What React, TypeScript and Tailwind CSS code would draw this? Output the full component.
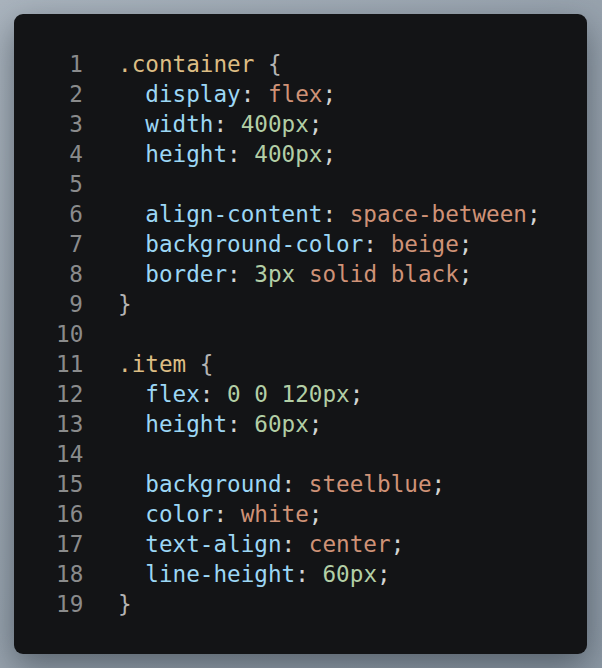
import React from 'react';

type Tok = { t: string; c?: string };

const SEL = 'text-[#dcbd84]';
const PROP = 'text-[#9cd7f5]';
const STR = 'text-[#cf9277]';
const NUM = 'text-[#b3cfa6]';
const PUN = 'text-[#d4d4d4]';
const BRACE = 'text-[#b4b4b4]';

const lines: Tok[][] = [
  [{ t: '.container', c: SEL }, { t: ' ' }, { t: '{', c: BRACE }],
  [{ t: '  ' }, { t: 'display', c: PROP }, { t: ': ', c: PUN }, { t: 'flex', c: STR }, { t: ';', c: PUN }],
  [{ t: '  ' }, { t: 'width', c: PROP }, { t: ': ', c: PUN }, { t: '400px', c: NUM }, { t: ';', c: PUN }],
  [{ t: '  ' }, { t: 'height', c: PROP }, { t: ': ', c: PUN }, { t: '400px', c: NUM }, { t: ';', c: PUN }],
  [],
  [{ t: '  ' }, { t: 'align-content', c: PROP }, { t: ': ', c: PUN }, { t: 'space-between', c: STR }, { t: ';', c: PUN }],
  [{ t: '  ' }, { t: 'background-color', c: PROP }, { t: ': ', c: PUN }, { t: 'beige', c: STR }, { t: ';', c: PUN }],
  [
    { t: '  ' },
    { t: 'border', c: PROP },
    { t: ': ', c: PUN },
    { t: '3px', c: NUM },
    { t: ' ' },
    { t: 'solid black', c: STR },
    { t: ';', c: PUN },
  ],
  [{ t: '}', c: BRACE }],
  [],
  [{ t: '.item', c: SEL }, { t: ' ' }, { t: '{', c: BRACE }],
  [{ t: '  ' }, { t: 'flex', c: PROP }, { t: ': ', c: PUN }, { t: '0 0 120px', c: NUM }, { t: ';', c: PUN }],
  [{ t: '  ' }, { t: 'height', c: PROP }, { t: ': ', c: PUN }, { t: '60px', c: NUM }, { t: ';', c: PUN }],
  [],
  [{ t: '  ' }, { t: 'background', c: PROP }, { t: ': ', c: PUN }, { t: 'steelblue', c: STR }, { t: ';', c: PUN }],
  [{ t: '  ' }, { t: 'color', c: PROP }, { t: ': ', c: PUN }, { t: 'white', c: STR }, { t: ';', c: PUN }],
  [{ t: '  ' }, { t: 'text-align', c: PROP }, { t: ': ', c: PUN }, { t: 'center', c: STR }, { t: ';', c: PUN }],
  [{ t: '  ' }, { t: 'line-height', c: PROP }, { t: ': ', c: PUN }, { t: '60px', c: NUM }, { t: ';', c: PUN }],
  [{ t: '}', c: BRACE }],
];

export default function App() {
  return (
    <div className="w-[602px] h-[668px] p-[14px] pr-[15px] bg-gradient-to-br from-[#aab4be] via-[#98a3ae] to-[#8d99a5]">
      <div className="h-full rounded-[9px] bg-[#131416] shadow-[0_12px_34px_rgba(30,40,50,0.5)] pt-[35px] pl-[42px]">
        <pre className="font-['DejaVu_Sans_Mono','Liberation_Mono',monospace] text-[22.65px] leading-[30px] whitespace-pre">
          {lines.map((toks, i) => (
            <div key={i} className="flex">
              <span className="w-[27px] text-right text-[#8a8b8c] shrink-0">{i + 1}</span>
              <span className="ml-[35px]">
                {toks.map((tk, j) => (
                  <span key={j} className={tk.c}>
                    {tk.t}
                  </span>
                ))}
                {toks.length === 0 ? ' ' : null}
              </span>
            </div>
          ))}
        </pre>
      </div>
    </div>
  );
}
